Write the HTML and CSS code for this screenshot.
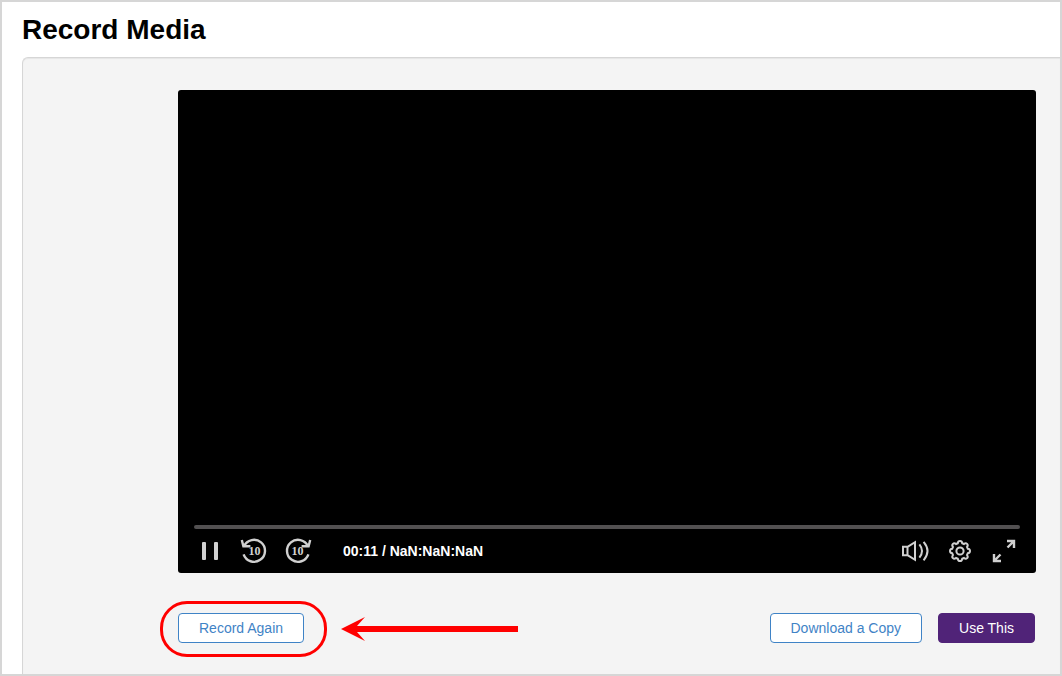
FILE: index.html
```html
<!DOCTYPE html>
<html lang="en">
<head>
<meta charset="utf-8">
<title>Record Media</title>
<link rel="stylesheet" href="styles.css">
</head>
<body>
<main class="page">
  <h1 class="title">Record Media</h1>
  <section class="panel">
    <div class="player">
      <div class="progress"></div>
      <div class="controls">
        <button class="icon-button" type="button" aria-label="Pause">
          <svg class="icon" viewBox="0 0 32 32"><rect x="8" y="7" width="4" height="18" rx="1"/><rect x="20" y="7" width="4" height="18" rx="1"/></svg>
        </button>
        <button class="icon-button" type="button" aria-label="Back 10 seconds">
          <svg class="icon" viewBox="0 0 32 32"><path class="line bold" d="M5.6 19.4A11 11 0 1 0 6 11.2"/><path class="line bold" d="M3.8 5 5.4 11.2H12.4"/><text class="skip" x="16.5" y="20">10</text></svg>
        </button>
        <button class="icon-button" type="button" aria-label="Forward 10 seconds">
          <svg class="icon" viewBox="0 0 32 32"><path class="line bold" d="M26.4 19.4A11 11 0 1 1 26 11.2"/><path class="line bold" d="M28.2 5 26.6 11.2H19.6"/><text class="skip" x="15.5" y="20">10</text></svg>
        </button>
        <span class="time">00:11 / NaN:NaN:NaN</span>
        <button class="icon-button" type="button" aria-label="Volume">
          <svg class="icon" viewBox="0 0 32 32"><path class="line" d="M3 11.8H7.5V20.2H3ZM7.5 11.8 15 7.2V24.8L7.5 20.2"/><path class="line" d="M19.4 9.4Q24.6 16 19.4 22.6M23.6 6.8Q31.4 16 23.6 25.4"/></svg>
        </button>
        <button class="icon-button" type="button" aria-label="Settings">
          <svg class="icon" viewBox="0 0 32 32"><circle class="line" cx="16" cy="16" r="3.6"/><path class="line" d="M13.8 8.2Q14 6 16 6T18.2 8.2L20 9Q21.8 7.6 23.1 8.9T23 12L23.8 13.8Q26 14 26 16T23.8 18.2L23 20Q24.4 21.8 23.1 23.1T20 23L18.2 23.8Q18 26 16 26T13.8 23.8L12 23Q10.2 24.4 8.9 23.1T9 20L8.2 18.2Q6 18 6 16T8.2 13.8L9 12Q7.6 10.2 8.9 8.9T12 9Z"/></svg>
        </button>
        <button class="icon-button" type="button" aria-label="Full screen">
          <svg class="icon" viewBox="0 0 32 32"><path class="line bold" d="M19 6H26V13M26 6 19.5 12.5M6 19V26H13M6 26 12.5 19.5"/></svg>
        </button>
      </div>
    </div>
    <div class="actions">
      <div class="highlight">
        <button class="button" type="button">Record Again</button>
        <svg class="arrow" viewBox="0 0 177 24"><path d="M0 12 24 0 16 9H177V15H16L24 24Z"/></svg>
      </div>
      <button class="button download" type="button">Download a Copy</button>
      <button class="button primary" type="button">Use This</button>
    </div>
  </section>
</main>
</body>
</html>
```
FILE: styles.css
```css
* {
  box-sizing: border-box;
}

body {
  margin: 0;
  font-family: "Liberation Sans", Arial, sans-serif;
  background: #fff;
}

.page {
  display: flex;
  flex-direction: column;
  min-height: 100vh;
  padding-left: 20px;
  border: 2px solid #d6d6d6;
}

.title {
  margin: 0;
  padding: 12px 0 11px;
  font-size: 28px;
  line-height: 32px;
  color: #000;
}

.panel {
  flex: 1;
  padding: 32px 24px 30px 155px;
  background: #f4f4f4;
  border: 1px solid #d6d6d6;
  border-width: 1px 0 0 1px;
  border-top-left-radius: 6px;
  box-shadow: inset 0 1px 1px #e6e6e6;
}

.player {
  display: flex;
  flex-direction: column;
  justify-content: flex-end;
  aspect-ratio: 16 / 9;
  background: #000;
  border-radius: 3px;
}

.progress {
  height: 4px;
  margin: 0 16px;
  background: #525051;
  border-radius: 2px;
}

.controls {
  display: flex;
  align-items: center;
  height: 44px;
  padding: 0 10px;
}

.icon-button {
  display: flex;
  justify-content: center;
  width: 44px;
  padding: 0;
  border: 0;
  background: none;
}

.icon {
  width: 32px;
  height: 32px;
  fill: #d0d0d0;
}

.line {
  fill: none;
  stroke: #d0d0d0;
  stroke-width: 2;
}

.bold {
  stroke-width: 2.4;
}

.skip {
  font-family: "Liberation Serif", "Times New Roman", serif;
  font-size: 12px;
  font-weight: bold;
  text-anchor: middle;
}

.time {
  flex: 1;
  padding-left: 23px;
  font-size: 14px;
  font-weight: bold;
  color: #fff;
}

.actions {
  display: flex;
  gap: 16px;
  margin-top: 40px;
  padding-right: 1px;
}

.highlight {
  position: relative;
}

.highlight::before {
  content: "";
  position: absolute;
  inset: -12px -23px -14px -18px;
  border: 3px solid #f00;
  border-radius: 27px;
  pointer-events: none;
}

.arrow {
  position: absolute;
  top: 4px;
  left: 163px;
  width: 177px;
  height: 24px;
  fill: #f00;
}

.button {
  height: 30px;
  padding: 0 20px;
  font-family: inherit;
  font-size: 14px;
  color: #3f83c6;
  background: #fff;
  border: 1px solid #3f83c6;
  border-radius: 4px;
}

.download {
  margin-left: auto;
}

.primary {
  color: #fff;
  background: #502378;
  border-color: #502378;
}
```
